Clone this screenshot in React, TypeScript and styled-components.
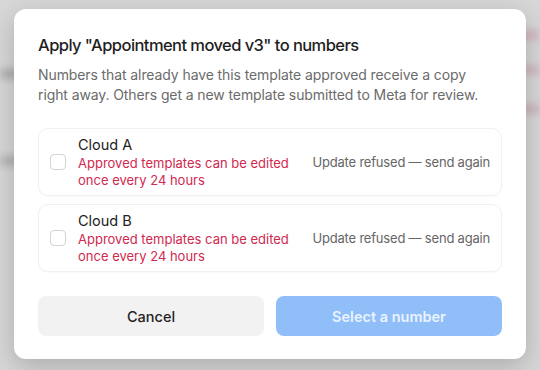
import React from "react";
import styled, { createGlobalStyle } from "styled-components";

const Global = createGlobalStyle`
  html, body { margin: 0; padding: 0; }
  body {
    width: 540px;
    height: 370px;
    overflow: hidden;
    font-family: Inter, "Noto Sans", sans-serif;
    background: #e2e2e2;
  }
`;

const Stage = styled.div`
  position: relative;
  width: 540px;
  height: 370px;
  overflow: hidden;
`;

const Backdrop = styled.div`
  position: absolute;
  inset: 0;
  display: flex;
  flex-direction: column;
  filter: blur(4px);
  background: #e3e3e3;
`;

const BackRow = styled.div<{ $tone: string; $w: number; $top: number; $right?: boolean }>`
  height: 8px;
  margin-top: ${(p) => p.$top}px;
  width: ${(p) => p.$w}px;
  align-self: ${(p) => (p.$right ? "flex-end" : "flex-start")};
  background: ${(p) => p.$tone};
  border-radius: 4px;
`;

const Overlay = styled.div`
  position: absolute;
  inset: 0;
  background: rgba(190, 190, 190, 0.3);
  display: flex;
  align-items: flex-start;
  justify-content: center;
  padding-top: 9px;
`;

const Modal = styled.div`
  width: 512px;
  box-sizing: border-box;
  background: #ffffff;
  border-radius: 12px;
  padding: 26px 24px 23px;
  box-shadow: 0 8px 26px rgba(0, 0, 0, 0.2);
  display: flex;
  flex-direction: column;
`;

const Title = styled.h2`
  margin: 0;
  font-size: 16.5px;
  line-height: 20px;
  font-weight: 500;
  color: #1f1f1f;
  letter-spacing: -0.57px;
`;

const Desc = styled.p`
  margin: 10px 0 0;
  max-width: 445px;
  font-size: 14px;
  line-height: 20px;
  color: #6b6b6b;
  letter-spacing: -0.1px;
`;

const List = styled.div`
  margin-top: 23px;
  display: flex;
  flex-direction: column;
  gap: 8px;
`;

const Card = styled.label`
  display: flex;
  align-items: center;
  gap: 12px;
  height: 68px;
  box-sizing: border-box;
  padding: 0 11px;
  border: 1px solid #f0f0f0;
  border-radius: 10px;
  box-shadow: 0 1px 2px rgba(0, 0, 0, 0.03);
`;

const Check = styled.span`
  width: 16px;
  height: 16px;
  box-sizing: border-box;
  border: 1px solid #d4d4d4;
  border-radius: 4px;
  flex: none;
`;

const Info = styled.div`
  flex: 1;
  display: flex;
  flex-direction: column;
`;

const Name = styled.div`
  font-size: 14.5px;
  line-height: 20px;
  color: #222222;
`;

const Warn = styled.div`
  font-size: 13px;
  line-height: 17px;
  color: #d1294f;
  max-width: 215px;
`;

const Status = styled.div`
  font-size: 13px;
  color: #666666;
  white-space: nowrap;
  letter-spacing: -0.2px;
`;

const Actions = styled.div`
  margin-top: 24px;
  display: grid;
  grid-template-columns: 1fr 1fr;
  gap: 12px;
`;

const Button = styled.button<{ $primary?: boolean }>`
  height: 40px;
  border: none;
  border-radius: 8px;
  font-family: inherit;
  font-size: 14.5px;
  font-weight: ${(p) => (p.$primary ? 600 : 500)};
  background: ${(p) => (p.$primary ? "#90bef8" : "#f2f2f2")};
  color: ${(p) => (p.$primary ? "#eaf3ff" : "#222222")};
`;

const numbers = ["Cloud A", "Cloud B"];

export default function App() {
  return (
    <Stage>
      <Global />
      <Backdrop>
        <BackRow $tone="#d9a9b8" $w={40} $top={31} $right />
        <BackRow $tone="#d9a9b8" $w={40} $top={27} $right />
        <BackRow $tone="#9a9a9a" $w={60} $top={-4} />
        <BackRow $tone="#d0a4b4" $w={40} $top={27} $right />
        <BackRow $tone="#a0a0a0" $w={60} $top={44} />
      </Backdrop>
      <Overlay>
        <Modal role="dialog">
          <Title>Apply "Appointment moved v3" to numbers</Title>
          <Desc>
            Numbers that already have this template approved receive a copy right away. Others
            get a new template submitted to Meta for review.
          </Desc>
          <List>
            {numbers.map((n) => (
              <Card key={n}>
                <Check />
                <Info>
                  <Name>{n}</Name>
                  <Warn>Approved templates can be edited once every 24 hours</Warn>
                </Info>
                <Status>Update refused — send again</Status>
              </Card>
            ))}
          </List>
          <Actions>
            <Button>Cancel</Button>
            <Button $primary disabled>
              Select a number
            </Button>
          </Actions>
        </Modal>
      </Overlay>
    </Stage>
  );
}
